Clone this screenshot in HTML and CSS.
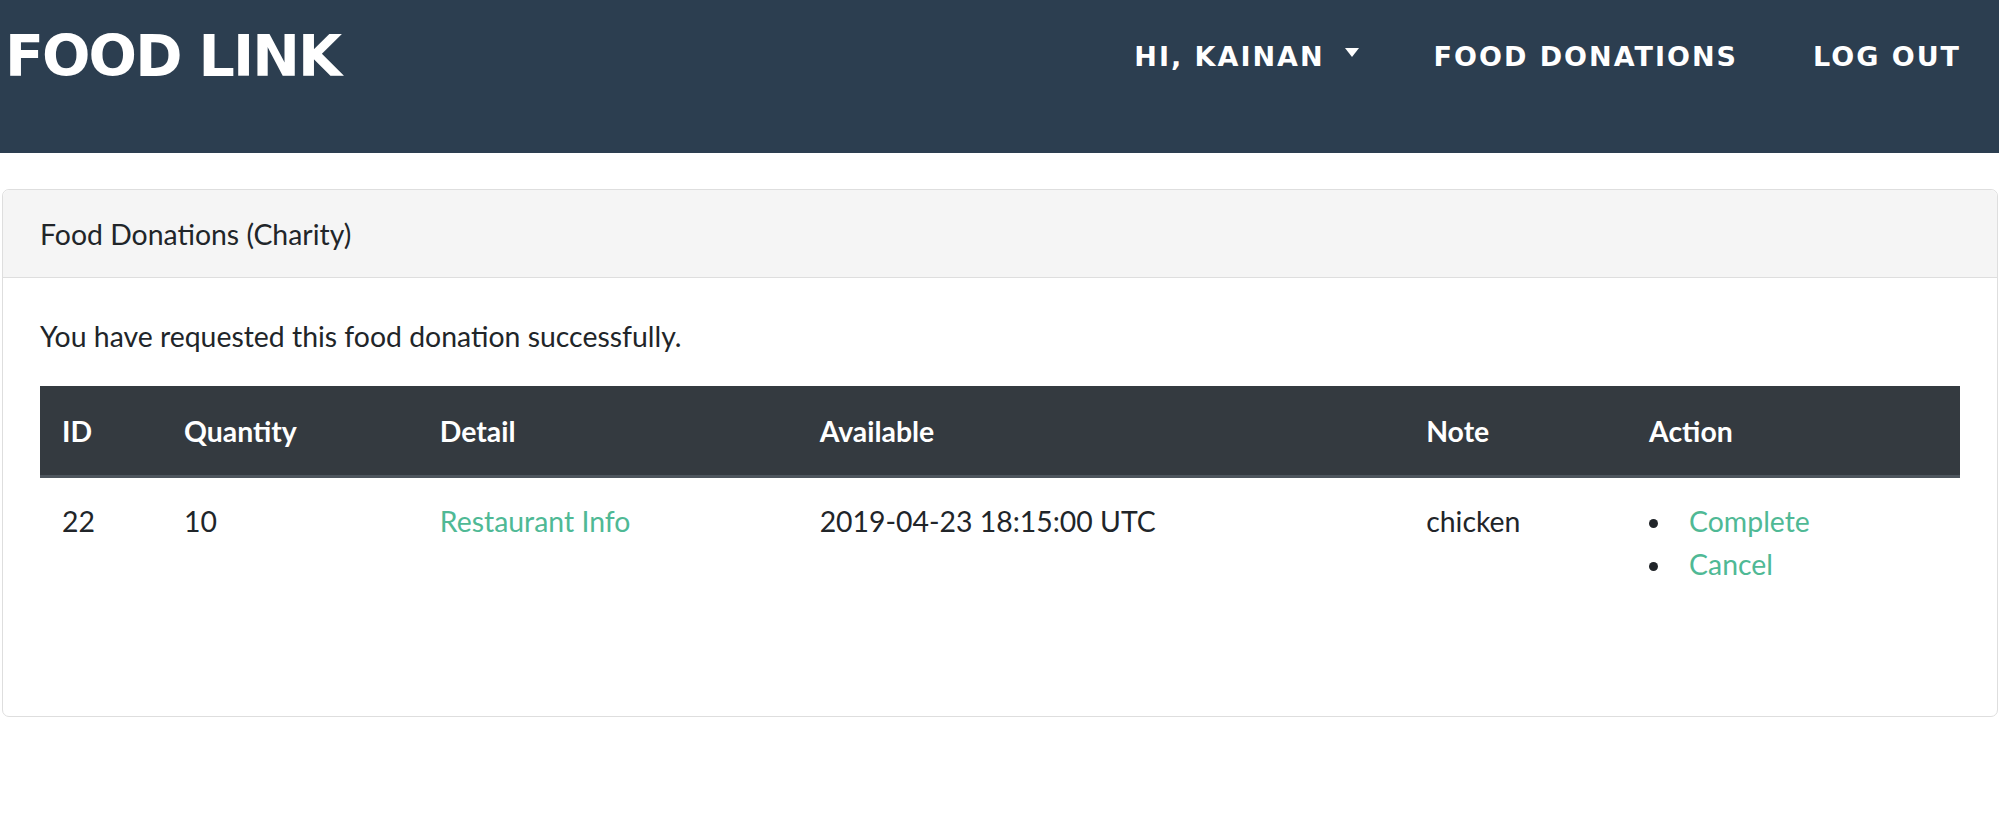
FILE: index.html
```html
<!DOCTYPE html>
<html lang="en">
<head>
<meta charset="utf-8">
<title>Food Link</title>
<link rel="stylesheet" href="styles.css">
</head>
<body>
<nav class="navbar">
  <a class="brand" href="#">FOOD LINK</a>
  <ul class="nav">
    <li><a class="nav-link dropdown" href="#">HI, KAINAN<span class="caret"></span></a></li>
    <li><a class="nav-link" href="#">FOOD DONATIONS</a></li>
    <li><a class="nav-link" href="#">LOG OUT</a></li>
  </ul>
</nav>
<div class="card">
  <div class="card-header">Food Donations (Charity)</div>
  <div class="card-body">
    <p class="notice">You have requested this food donation successfully.</p>
    <table class="table">
      <colgroup>
        <col class="c-id"><col class="c-qty"><col class="c-detail"><col class="c-avail"><col class="c-note"><col class="c-action">
      </colgroup>
      <thead>
        <tr><th>ID</th><th>Quantity</th><th>Detail</th><th>Available</th><th>Note</th><th>Action</th></tr>
      </thead>
      <tbody>
        <tr>
          <td>22</td>
          <td>10</td>
          <td><a href="#">Restaurant Info</a></td>
          <td>2019-04-23 18:15:00 UTC</td>
          <td>chicken</td>
          <td>
            <ul class="actions">
              <li><a href="#">Complete</a></li>
              <li><a href="#">Cancel</a></li>
            </ul>
          </td>
        </tr>
      </tbody>
    </table>
  </div>
</div>
</body>
</html>
```

FILE: styles.css
```css
* { box-sizing: border-box; }
html, body { margin: 0; padding: 0; }
body {
  font-family: Lato, "Liberation Sans", sans-serif;
  font-size: 28.4px;
  line-height: 1.5;
  color: #212529;
  background: #ffffff;
}
a { color: #4fb995; text-decoration: none; }

.navbar {
  height: 153px;
  background: #2c3e50;
  display: flex;
  align-items: center;
  justify-content: space-between;
  padding: 0 38px 40px 5px;
}
.brand {
  font-family: "DejaVu Sans", sans-serif;
  font-weight: bold;
  font-size: 57px;
  line-height: 1;
  color: #ffffff;
  letter-spacing: -1.9px;
}
.nav {
  display: flex;
  align-items: center;
  gap: 75px;
  list-style: none;
  margin: 0;
  padding: 0;
}
.nav-link {
  display: flex;
  align-items: center;
  font-family: "DejaVu Sans", sans-serif;
  font-weight: bold;
  font-size: 27px;
  line-height: 1;
  color: #ffffff;
  letter-spacing: 2px;
}
.caret {
  display: inline-block;
  width: 0;
  height: 0;
  margin-left: 20px;
  margin-top: -8px;
  border-top: 9px solid #ffffff;
  border-left: 7px solid transparent;
  border-right: 7px solid transparent;
}

.card {
  margin: 36px 1px 0 2px;
  border: 1px solid #dedede;
  border-radius: 7px;
  background: #ffffff;
}
.card-header {
  background: #f5f5f5;
  border-bottom: 1px solid #dedede;
  border-radius: 7px 7px 0 0;
  padding: 23px 37px 21px 37px;
  height: 88px;
}
.card-body {
  padding: 37px 37px 38px 37px;
}
.notice {
  margin: 0 0 28px 0;
}
.table {
  width: 100%;
  border-collapse: collapse;
  margin: 0 0 30px 0;
}
.c-id { width: 122px; }
.c-qty { width: 256px; }
.c-detail { width: 380px; }
.c-avail { width: 607px; }
.c-note { width: 223px; }
.c-action { width: 333px; }
.table th {
  background: #343a40;
  color: #ffffff;
  font-weight: bold;
  text-align: left;
  vertical-align: bottom;
  padding: 24px 22px 23px 22px;
  border-bottom: 3px solid #4d555d;
}
.table td {
  vertical-align: top;
  padding: 22px 22px 22px 22px;
}
.actions {
  margin: 0 0 41px 0;
  padding: 0 0 0 25px;
}
.actions li {
  padding-left: 15px;
}
```
